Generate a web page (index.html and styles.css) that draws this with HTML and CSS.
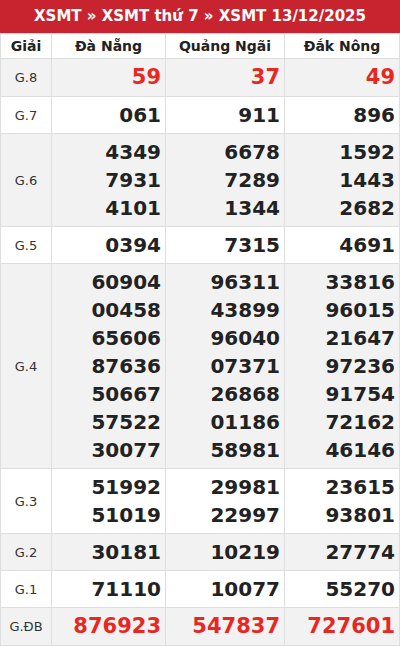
FILE: index.html
```html
<!DOCTYPE html>
<html lang="vi">
<head>
<meta charset="utf-8">
<link rel="stylesheet" href="styles.css">
</head>
<body>
<div class="box">
  <div class="title">XSMT » XSMT thứ 7 » XSMT 13/12/2025</div>
  <table class="kq">
    <colgroup><col class="c0"><col class="c1"><col class="c2"><col class="c3"></colgroup>
    <thead>
      <tr><th>Giải</th><th>Đà Nẵng</th><th>Quảng Ngãi</th><th>Đắk Nông</th></tr>
    </thead>
    <tbody>
      <tr class="alt"><td class="g">G.8</td><td class="n red big"><div>59</div></td><td class="n red big"><div>37</div></td><td class="n red big"><div>49</div></td></tr>
      <tr><td class="g">G.7</td><td class="n"><div>061</div></td><td class="n"><div>911</div></td><td class="n"><div>896</div></td></tr>
      <tr class="alt"><td class="g">G.6</td><td class="n"><div>4349</div><div>7931</div><div>4101</div></td><td class="n"><div>6678</div><div>7289</div><div>1344</div></td><td class="n"><div>1592</div><div>1443</div><div>2682</div></td></tr>
      <tr><td class="g">G.5</td><td class="n"><div>0394</div></td><td class="n"><div>7315</div></td><td class="n"><div>4691</div></td></tr>
      <tr class="alt"><td class="g">G.4</td>
        <td class="n"><div>60904</div><div>00458</div><div>65606</div><div>87636</div><div>50667</div><div>57522</div><div>30077</div></td>
        <td class="n"><div>96311</div><div>43899</div><div>96040</div><div>07371</div><div>26868</div><div>01186</div><div>58981</div></td>
        <td class="n"><div>33816</div><div>96015</div><div>21647</div><div>97236</div><div>91754</div><div>72162</div><div>46146</div></td></tr>
      <tr><td class="g">G.3</td><td class="n"><div>51992</div><div>51019</div></td><td class="n"><div>29981</div><div>22997</div></td><td class="n"><div>23615</div><div>93801</div></td></tr>
      <tr class="alt"><td class="g">G.2</td><td class="n"><div>30181</div></td><td class="n"><div>10219</div></td><td class="n"><div>27774</div></td></tr>
      <tr><td class="g">G.1</td><td class="n"><div>71110</div></td><td class="n"><div>10077</div></td><td class="n"><div>55270</div></td></tr>
      <tr class="alt"><td class="g">G.ĐB</td><td class="n red big"><div>876923</div></td><td class="n red big"><div>547837</div></td><td class="n red big"><div>727601</div></td></tr>
    </tbody>
  </table>
</div>
</body>
</html>
```

FILE: styles.css
```css
html, body {
  margin: 0;
  padding: 0;
  background: #fff;
  font-family: "DejaVu Sans", sans-serif;
}
.box {
  width: 400px;
}
.title {
  background: #c8242f;
  color: #fff;
  font-weight: bold;
  font-size: 15px;
  height: 33px;
  line-height: 33px;
  text-align: center;
}
.kq {
  width: 100%;
  border-collapse: collapse;
  table-layout: fixed;
  border: 1px solid #d6d8e0;
}
.c0 { width: 51px; }
.c1 { width: 114px; }
.c2 { width: 119px; }
.kq th, .kq td {
  border: 1px solid #dedede;
}
.kq th {
  font-size: 14px;
  font-weight: bold;
  color: #222;
  height: 24px;
  padding: 0;
  text-align: center;
  background: #fff;
}
.kq tr.alt td {
  background: #f2f2f3;
}
.g {
  text-align: center;
  font-size: 13px;
  color: #333;
  padding: 0;
}
.n {
  text-align: right;
  padding: 4px 4px 4px 0;
  font-weight: bold;
  font-size: 20px;
  line-height: 28px;
  color: #222;
}
.n.red {
  color: #e8281f;
}
.n.big {
  font-size: 21px;
  line-height: 29px;
}
```
